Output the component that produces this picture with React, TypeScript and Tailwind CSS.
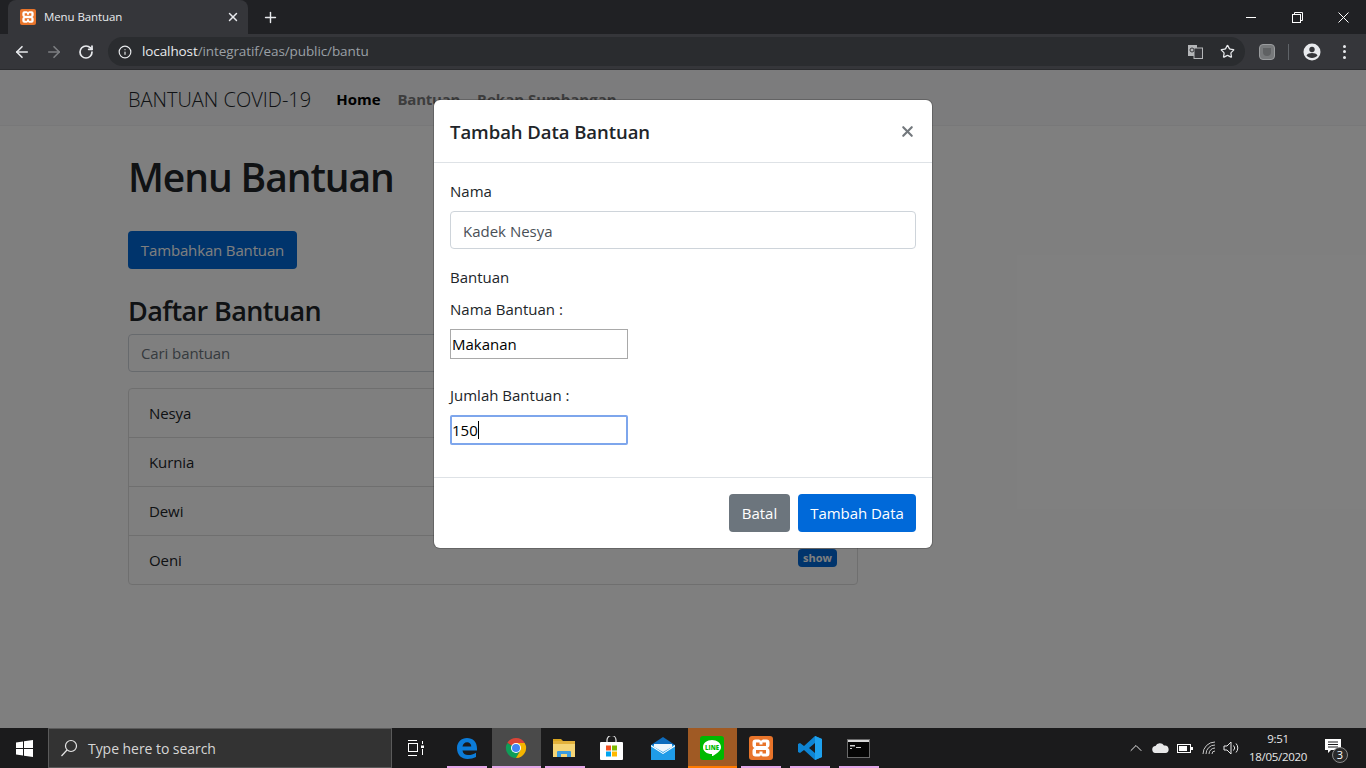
import type React from "react";
import { X, Plus, ArrowLeft, ArrowRight, RotateCw, Info, Star, ChevronUp } from "lucide-react";

const font = "font-['Open_Sans','Noto_Sans',sans-serif]";

function XamppIcon({ size = 16 }: { size?: number }) {
  return (
    <svg width={size} height={size} viewBox="0 0 24 24">
      <rect x="0" y="0" width="24" height="24" rx="3" fill="#e8742a" />
      <path
        d="M6.500 3.500h3a2.500 2.500 0 0 1 2.500 1.500 2.500 2.500 0 0 1 2.500-1.500h3a3 3 0 0 1 3 3v2.500a3 3 0 0 1-2 3 3 3 0 0 1 2 3v2.500a3 3 0 0 1-3 3h-3a2.500 2.500 0 0 1-2.500-1.500 2.500 2.500 0 0 1-2.500 1.500h-3a3 3 0 0 1-3-3V15a3 3 0 0 1 2-3 3 3 0 0 1-2-3V6.500a3 3 0 0 1 3-3z"
        fill="#fff"
      />
      <path d="M7 6.500h3.500v2h3v-2H17v3.500H7zM7 14h10v3.500h-3.500v-2h-3v2H7z" fill="#e8742a" />
    </svg>
  );
}

function TitleBar() {
  return (
    <div className="h-[34px] bg-[#202124] flex items-end shrink-0">
      <div className="ml-2 w-[240px] h-[34px] bg-[#35363a] rounded-t-lg flex items-center pl-3 pr-2">
        <XamppIcon />
        <span className={`ml-2 text-[11.5px] tracking-[-0.1px] text-[#e8eaed] ${font}`}>Menu Bantuan</span>
        <X className="ml-auto text-[#e8eaed]" size={14} strokeWidth={2.5} />
      </div>
      <div className="ml-[14px] h-[34px] flex items-center">
        <Plus className="text-[#e8eaed]" size={17} strokeWidth={2} />
      </div>
      <div className="ml-auto flex items-center h-full text-white">
        <div className="w-[46px] flex justify-center">
          <div className="w-[10px] h-px bg-white" />
        </div>
        <div className="w-[46px] flex justify-center">
          <svg width="11" height="11" viewBox="0 0 11 11" fill="none" stroke="#fff">
            <rect x="0.500" y="2.500" width="8" height="8" />
            <path d="M2.500 2.500V.5h8v8H8.500" />
          </svg>
        </div>
        <div className="w-[46px] flex justify-center">
          <svg width="11" height="11" viewBox="0 0 11 11" stroke="#fff">
            <path d="M.5.5l10 10M10.500.5l-10 10" />
          </svg>
        </div>
      </div>
    </div>
  );
}

function Toolbar() {
  return (
    <div className="h-[36px] bg-[#35363a] flex items-center shrink-0 border-b border-[#2a2b2e]">
      <ArrowLeft className="ml-[13px] text-[#e8eaed]" size={18} strokeWidth={2.2} />
      <ArrowRight className="ml-[14px] text-[#7d7f82]" size={18} strokeWidth={2.2} />
      <RotateCw className="ml-[15px] text-[#e8eaed]" size={16} strokeWidth={2.6} />
      <div className="ml-[14px] w-[1137px] h-[29px] rounded-full bg-[#2a2c2f] flex items-center">
        <Info className="ml-[10px] text-[#e8eaed]" size={14} strokeWidth={2} />
        <span className={`ml-[10px] text-[13.5px] tracking-[-0.1px] text-[#e8eaed] ${font}`}>
          localhost<span className="text-[#9aa0a6]">/integratif/eas/public/bantu</span>
        </span>
        <div className="ml-auto flex items-center">
          <svg width="15" height="14" viewBox="0 0 15 14" className="mr-[17px]">
            <rect x="0" y="0" width="9" height="11" fill="#b4b6b8" />
            <rect x="6" y="3" width="8.500" height="10.500" fill="#35363a" stroke="#b4b6b8" />
            <circle cx="4" cy="5" r="2" fill="none" stroke="#35363a" />
          </svg>
          <Star className="mr-[10px] text-[#e8eaed]" size={15} strokeWidth={2} />
        </div>
      </div>
      <div className="ml-[14px] w-4 h-4 rounded-sm bg-[#77797b] border border-[#9a9c9e] flex items-center justify-center">
        <div className="w-2 h-2 rounded-b bg-[#5f6163]" />
      </div>
      <div className="ml-[13px] w-px h-4 bg-[#5f6368]" />
      <svg width="18" height="18" viewBox="0 0 18 18" className="ml-[14px]">
        <circle cx="9" cy="9" r="8.500" fill="#e8eaed" />
        <circle cx="9" cy="6.500" r="2.700" fill="#35363a" />
        <path d="M3.500 12.500c1-2 3.200-2.600 5.500-2.600s4.500.6 5.500 2.600c-1.200 1.500-3.300 2.400-5.500 2.400s-4.300-.9-5.500-2.400z" fill="#35363a" />
      </svg>
      <div className="ml-[22px] flex flex-col gap-[2.5px]">
        <div className="w-[3px] h-[3px] rounded-full bg-[#e8eaed]" />
        <div className="w-[3px] h-[3px] rounded-full bg-[#e8eaed]" />
        <div className="w-[3px] h-[3px] rounded-full bg-[#e8eaed]" />
      </div>
    </div>
  );
}

function ListRow({ name, last }: { name: string; last?: boolean }) {
  return (
    <div className={`flex items-start justify-between px-5 ${last ? "h-[48px]" : "h-[49px] border-b border-[#dfdfdf]"}`}>
      <span className="mt-[13px] text-[15px] tracking-[-0.1px] text-[#212529]">{name}</span>
      {last && (
        <span className="mt-[13px] h-[18px] w-[39px] rounded bg-[#0069d9] text-white text-[11px] font-bold flex items-center justify-center">
          show
        </span>
      )}
    </div>
  );
}

function PageBehind() {
  return (
    <div className={`absolute inset-0 bg-white ${font}`}>
      <div className="h-[56px] pt-1 bg-[#f8f9fa] border-b border-[#f0f1f2] flex items-center pl-[128px]">
        <span className="text-[20px] font-light text-[#212529]">BANTUAN COVID-19</span>
        <span className="ml-[25px] text-[15px] font-bold text-black">Home</span>
        <span className="ml-[17px] text-[15px] font-bold tracking-[-0.25px] text-[#7a7a7a]">Bantuan</span>
        <span className="ml-[17px] text-[15px] font-bold text-[#7a7a7a]">Rekan Sumbangan</span>
      </div>
      <div className="pl-[128px] w-[858px]">
        <h1 className="mt-[26px] text-[39px] leading-[50px] font-semibold tracking-[-1.1px] text-[#212529]">Menu Bantuan</h1>
        <div className="mt-[29px] w-[169px] h-[38px] rounded bg-[#0069d9] text-white text-[15px] tracking-[-0.15px] flex items-center justify-center">
          Tambahkan Bantuan
        </div>
        <h3 className="mt-[24px] text-[27px] leading-[36px] font-semibold tracking-[-0.6px] text-[#212529]">Daftar Bantuan</h3>
        <div className="mt-[5px] h-[38px] pt-px rounded border border-[#ced4da] bg-white pl-3 flex items-center text-[15px] tracking-[-0.1px] text-[#6c757d]">
          Cari bantuan
        </div>
        <div className="mt-[16px] rounded border border-[#dfdfdf]">
          <ListRow name="Nesya" />
          <ListRow name="Kurnia" />
          <ListRow name="Dewi" />
          <ListRow name="Oeni" last />
        </div>
      </div>
    </div>
  );
}

function Modal() {
  return (
    <div className={`absolute left-[434px] top-[30px] w-[498px] h-[448px] bg-white rounded-md shadow-[0_0_0_1px_rgba(0,0,0,0.2)] flex flex-col ${font}`}>
      <div className="h-[63px] border-b border-[#dee2e6] flex items-center justify-between pl-4 pr-4 shrink-0">
        <span className="mt-0.5 text-[18.5px] font-semibold tracking-[-0.05px] text-[#212529]">Tambah Data Bantuan</span>
        <X className="text-[#73787d]" size={17} strokeWidth={3} />
      </div>
      <div className="flex-1 px-4 text-[15px] tracking-[0px] text-[#212529]">
        <div className="mt-[18px] leading-5">Nama</div>
        <div className="mt-[10px] h-[38px] pt-0.5 rounded border border-[#ced4da] pl-3 flex items-center text-[#495057]">Kadek Nesya</div>
        <div className="mt-[18px] leading-5">Bantuan</div>
        <div className="mt-[12px] leading-5">Nama Bantuan :</div>
        <div className="mt-[10px] w-[178px] h-[30px] border border-[#a9a9a9] pl-[1px] flex items-center text-black">Makanan</div>
        <div className="mt-[26px] leading-5">Jumlah Bantuan :</div>
        <div className="mt-[10px] w-[178px] h-[30px] rounded-[2px] border-2 border-[#7ea6ec] flex items-center text-black">
          150<span className="w-px h-[18px] bg-black" />
        </div>
      </div>
      <div className="h-[71px] border-t border-[#dee2e6] flex items-center justify-end gap-2 pr-4 shrink-0">
        <div className="w-[61px] h-[38px] rounded bg-[#6c757d] text-white text-[15px] flex items-center justify-center">Batal</div>
        <div className="w-[118px] h-[38px] rounded bg-[#0069d9] text-white text-[15px] tracking-[-0.05px] flex items-center justify-center">Tambah Data</div>
      </div>
    </div>
  );
}

function TaskSlot({ children, line, active, running }: { children: React.ReactNode; line?: boolean; active?: boolean; running?: boolean }) {
  return (
    <div className={`relative w-[49px] h-full pr-[2px] flex items-center justify-center ${active ? "bg-[#4a4a4a]" : ""} ${running ? "bg-[#a05a24]" : ""}`}>
      {children}
      {line && <div className="absolute bottom-0 left-[4px] right-[5px] h-[2px] bg-[#e3a6e8]" />}
      {active && <div className="absolute bottom-0 left-0 right-0 h-[2px] bg-[#e3a6e8]" />}
      {running && <div className="absolute bottom-0 left-0 right-0 h-[2px] bg-[#ff7a00]" />}
    </div>
  );
}

function Taskbar() {
  return (
    <div className={`h-[40px] bg-[#1b1b1c] flex items-center shrink-0 ${font}`}>
      <div className="w-[48px] flex justify-center">
        <svg width="17" height="17" viewBox="0 0 17 17" fill="#fff">
          <path d="M0 2.400 7 1.400V8H0zM8 1.200 17 0v8H8zM0 9h7v6.600l-7-1zM8 9h9v8l-9-1.200z" />
        </svg>
      </div>
      <div className="w-[344px] h-full bg-[#333333] border border-[#5a5a5a] flex items-center">
        <svg width="18" height="18" viewBox="0 0 18 18" fill="none" stroke="#e6e6e6" strokeWidth="1.200" className="ml-[11px]">
          <circle cx="11" cy="7" r="5.500" />
          <path d="M7 11 1.500 17" />
        </svg>
        <span className="ml-[10px] text-[14px] tracking-[-0.05px] text-[#d6d6d6]">Type here to search</span>
      </div>
      <div className="w-[51px] pr-[3px] flex justify-center">
        <svg width="16" height="16" viewBox="0 0 16 16" fill="none" stroke="#fff">
          <path d="M0 .5h9M0 15.500h9" />
          <rect x="0.500" y="3.500" width="9" height="8" />
          <path d="M14.500 1v3M14.500 9v6" />
          <rect x="13" y="5.500" width="3" height="2.500" fill="#fff" stroke="none" />
        </svg>
      </div>
      <div className="flex h-full">
        <TaskSlot line>
          <svg width="22" height="22" viewBox="0 0 22 22">
            <path
              d="M1 11C1 5 5.500 1 11 1c5.800 0 10 4 10 10.500v2H6.500c.3 3 2.700 4.500 5.500 4.500 3 0 5.500-.9 8-2.300v4.300c-2.400 1.300-5.200 2-8.500 2C5.500 22 1 18 1 11zm5.500-1.500h8.800c0-2.600-1.800-4.300-4.200-4.300-2.500 0-4.200 1.800-4.600 4.300z"
              fill="#0c7cd8"
            />
          </svg>
        </TaskSlot>
        <TaskSlot active>
          <svg width="24" height="24" viewBox="0 0 24 24">
            <path d="M12 12 L3.300 7A10 10 0 0 1 20.700 7z" fill="#db4437" />
            <path d="M3.300 7 A10 10 0 0 0 12 22L16.300 14.500z" fill="#0f9d58" />
            <path d="M20.700 7A10 10 0 0 1 12 22L16.300 14.500 12 7z" fill="#f4b400" />
            <circle cx="12" cy="12" r="5" fill="#fff" />
            <circle cx="12" cy="12" r="4" fill="#4285f4" />
          </svg>
        </TaskSlot>
        <TaskSlot line>
          <svg width="22" height="20" viewBox="0 0 22 20" className="mr-[2px]">
            <path d="M0 1h8l2 2H0z" fill="#d9a520" />
            <rect x="0" y="3" width="22" height="16" fill="#f5d576" />
            <rect x="0" y="3" width="22" height="3" fill="#e3b23c" />
            <path d="M4 19v-5a1 1 0 0 1 1-1h12a1 1 0 0 1 1 1v5h-4v-3H8v3z" fill="#3a9ce0" />
          </svg>
        </TaskSlot>
        <TaskSlot>
          <svg width="23" height="24" viewBox="0 0 23 24" className="mr-[4px]">
            <path d="M7 8V4a4.500 4.500 0 0 1 9 0v4" fill="none" stroke="#e6e6e6" strokeWidth="1.200" />
            <rect x="0" y="6" width="23" height="18" rx="1" fill="#fff" />
            <rect x="6" y="9.500" width="5" height="5" fill="#f25022" />
            <rect x="12" y="9.500" width="5" height="5" fill="#7fba00" />
            <rect x="6" y="15.500" width="5" height="5" fill="#00a4ef" />
            <rect x="12" y="15.500" width="5" height="5" fill="#ffb900" />
          </svg>
        </TaskSlot>
        <TaskSlot>
          <svg width="24" height="23" viewBox="0 0 24 23">
            <path d="M0 8 12 0l12 8v2H0z" fill="#0f6cbd" />
            <path d="M0 8h24v15H0z" fill="#1f9ce8" />
            <path d="M3 7h18v3l-9 5-9-5z" fill="#eef6fc" />
            <path d="M0 8l12 8 12-8v1.500L12 17 0 9.500z" fill="#fff" />
          </svg>
        </TaskSlot>
        <TaskSlot running>
          <svg width="24" height="24" viewBox="0 0 24 24">
            <rect width="24" height="24" rx="3" fill="#00b900" />
            <path d="M12 4c5 0 9 3 9 7.200 0 3.800-5.500 7.300-8.500 8.800-.6.300-.6-.7-.4-2C6.500 18 3 15 3 11.200 3 7 7 4 12 4z" fill="#fff" />
            <text x="12" y="13.500" textAnchor="middle" fontSize="6" fontWeight="800" fill="#00b900">LINE</text>
          </svg>
        </TaskSlot>
        <TaskSlot line>
          <XamppIcon size={24} />
        </TaskSlot>
        <TaskSlot line>
          <svg width="24" height="24" viewBox="0 0 24 24">
            <path d="M17 0 24 3v18l-7 3-11-10-4 3-2-1V8l2-1 4 3zM17 7l-6 5 6 5z" fill="#0e85d4" />
            <path d="M17 0 24 3v18l-7 3z" fill="#1ea1ee" />
          </svg>
        </TaskSlot>
        <TaskSlot line>
          <svg width="23" height="19" viewBox="0 0 23 19">
            <rect x="0.500" y="0.500" width="22" height="18" fill="#050505" stroke="#6a6a6a" />
            <rect x="1" y="1" width="21" height="2" fill="#d8d8d8" />
            <path d="M3 6h5v1.500H3zM3 9h2v1H3zM9 8h5v1H9z" fill="#d0d0d0" />
          </svg>
        </TaskSlot>
      </div>
      <div className="ml-auto flex items-center h-full text-white">
        <ChevronUp className="text-[#e8e8e8]" size={20} strokeWidth={1.200} />
        <svg width="17" height="10" viewBox="0 0 17 10" className="ml-[6px]">
          <path d="M4 10a3.500 3.500 0 0 1-.5-7A4.800 4.800 0 0 1 12 2.500 3.800 3.800 0 0 1 13.500 10z" fill="#e8e8e8" />
        </svg>
        <svg width="16" height="9" viewBox="0 0 16 9" fill="none" className="ml-[8px]">
          <rect x="0.500" y="0.500" width="13" height="8" stroke="#fff" />
          <rect x="2" y="2" width="8" height="5" fill="#fff" />
          <rect x="14" y="3" width="2" height="3" fill="#fff" />
        </svg>
        <svg width="14" height="14" viewBox="0 0 14 14" fill="none" stroke="#c8c8c8" className="ml-[9px]">
          <path d="M1 13A12 12 0 0 1 13 1M4 13a9 9 0 0 1 9-9M7 13a6 6 0 0 1 6-6M10 13a3 3 0 0 1 3-3" />
        </svg>
        <svg width="16" height="14" viewBox="0 0 16 14" fill="none" stroke="#e8e8e8" className="ml-[7px]">
          <path d="M1 5h3l4-4v12l-4-4H1zM10.500 4.500a3.500 3.500 0 0 1 0 5M13 2.500a6.500 6.500 0 0 1 0 9" />
        </svg>
        <div className="ml-[3px] w-[72px] flex flex-col items-center text-[11.5px] leading-[18px] tracking-[-0.3px] text-[#e8e8e8]">
          <span>9:51</span>
          <span>18/05/2020</span>
        </div>
        <div className="relative ml-[11px] mr-[25px] w-[16px] h-[14px] -mt-[4px]">
          <svg width="16" height="14" viewBox="0 0 16 14" fill="#fff">
            <path d="M0 0h16v11H6l-3 3v-3H0z" />
            <path d="M3 3h10M3 5.500h10M3 8h10" stroke="#1b1b1c" />
          </svg>
          <div className="absolute left-[7px] top-[8px] w-[16px] h-[16px] rounded-full bg-[#2a2a2a] border border-[#8a8a8a] text-[11px] leading-[14px] text-center text-white">3</div>
        </div>
      </div>
    </div>
  );
}

export default function App() {
  return (
    <div className="w-[1366px] h-[768px] flex flex-col overflow-hidden">
      <TitleBar />
      <Toolbar />
      <div className="relative flex-1">
        <PageBehind />
        <div className="absolute inset-0 bg-black/50" />
        <Modal />
      </div>
      <Taskbar />
    </div>
  );
}
